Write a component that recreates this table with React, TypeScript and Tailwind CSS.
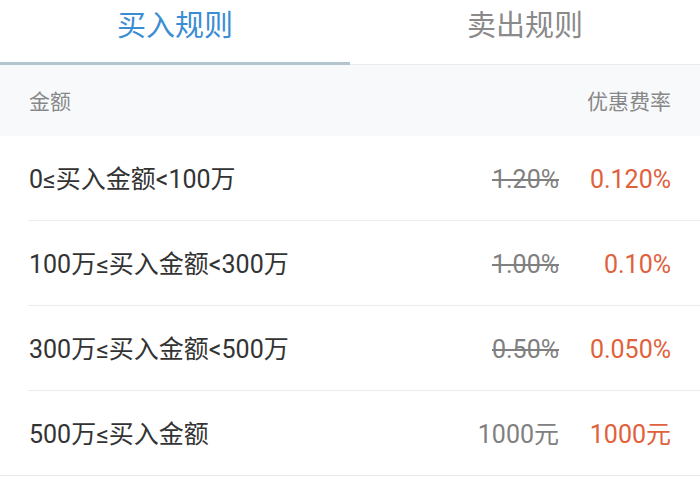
const rows = [
  { range: "0≤买入金额<100万", original: "1.20%", discount: "0.120%", strike: true, inset: true },
  { range: "100万≤买入金额<300万", original: "1.00%", discount: "0.10%", strike: true, inset: true },
  { range: "300万≤买入金额<500万", original: "0.50%", discount: "0.050%", strike: true, inset: true },
  { range: "500万≤买入金额", original: "1000元", discount: "1000元", strike: false, inset: false },
];

export default function App() {
  return (
    <div
      className="w-[700px] h-[502px] bg-white overflow-hidden"
      style={{ fontFamily: 'Roboto, "Noto Sans CJK SC", sans-serif' }}
    >
      {/* tabs */}
      <div className="flex h-[65px]">
        <div className="flex-1 flex flex-col">
          <div className="flex-1 flex justify-center pt-[7px] text-[29px] leading-[38px] text-[#3a8dd3]">
            买入规则
          </div>
          <div className="h-[3px] bg-[#b2c5ce]" />
        </div>
        <div className="flex-1 flex flex-col">
          <div className="flex-1 flex justify-center pt-[7px] text-[29px] leading-[38px] text-[#8a8a8a]">
            卖出规则
          </div>
          <div className="h-[1px] bg-[#e8edf0]" />
        </div>
      </div>

      {/* header */}
      <div className="flex items-center justify-between h-[71px] pt-[4px] px-[29px] bg-[#f7f9fb] text-[21px] text-[#888888]">
        <span>金额</span>
        <span>优惠费率</span>
      </div>

      {/* rows */}
      {rows.map((r) => (
        <div key={r.range}>
          <div className="flex items-center h-[84px] pt-[4px] pl-[29px] pr-[29px] text-[25px]">
            <span className="flex-1 text-[#333333]">{r.range}</span>
            <span
              className={
                "text-right text-[#808080] " + (r.strike ? "line-through decoration-[2px]" : "")
              }
            >
              {r.original}
            </span>
            <span className="w-[100px] ml-[12px] text-right text-[#e0613c]">{r.discount}</span>
          </div>
          <div className={r.inset ? "ml-[28px] h-[1px] bg-[#ececec]" : "h-[1px] bg-[#e8e8e8]"} />
        </div>
      ))}
    </div>
  );
}
